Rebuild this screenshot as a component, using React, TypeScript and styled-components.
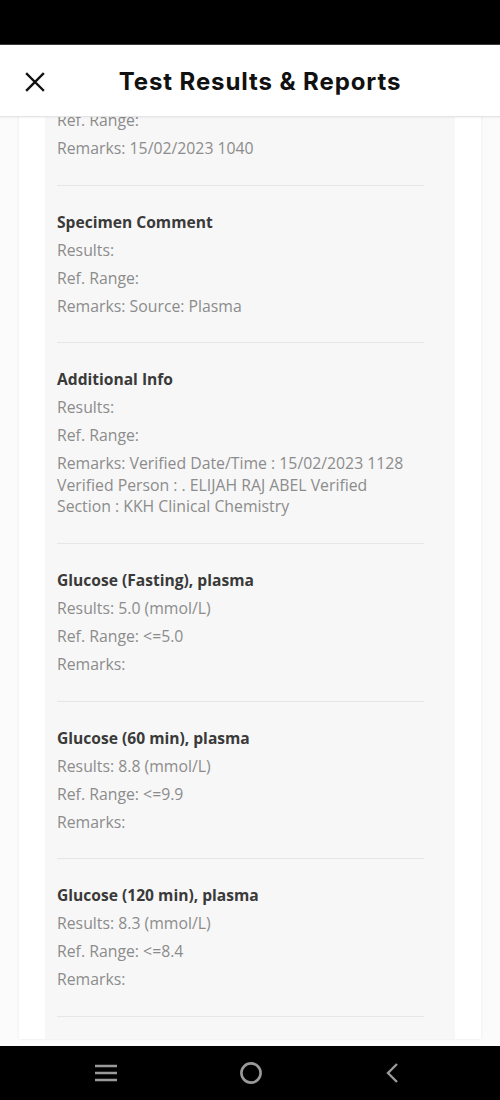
import styled, { createGlobalStyle } from 'styled-components';

type Row = { label: string; value: string };
type Section = { title?: string; rows: Row[] };

const sections: Section[] = [
  {
    rows: [
      { label: 'Ref. Range', value: '' },
      { label: 'Remarks', value: '15/02/2023 1040' },
    ],
  },
  {
    title: 'Specimen Comment',
    rows: [
      { label: 'Results', value: '' },
      { label: 'Ref. Range', value: '' },
      { label: 'Remarks', value: 'Source: Plasma' },
    ],
  },
  {
    title: 'Additional Info',
    rows: [
      { label: 'Results', value: '' },
      { label: 'Ref. Range', value: '' },
      {
        label: 'Remarks',
        value:
          'Verified Date/Time : 15/02/2023 1128 Verified Person : . ELIJAH RAJ ABEL Verified Section : KKH Clinical Chemistry',
      },
    ],
  },
  {
    title: 'Glucose (Fasting), plasma',
    rows: [
      { label: 'Results', value: '5.0 (mmol/L)' },
      { label: 'Ref. Range', value: '<=5.0' },
      { label: 'Remarks', value: '' },
    ],
  },
  {
    title: 'Glucose (60 min), plasma',
    rows: [
      { label: 'Results', value: '8.8 (mmol/L)' },
      { label: 'Ref. Range', value: '<=9.9' },
      { label: 'Remarks', value: '' },
    ],
  },
  {
    title: 'Glucose (120 min), plasma',
    rows: [
      { label: 'Results', value: '8.3 (mmol/L)' },
      { label: 'Ref. Range', value: '<=8.4' },
      { label: 'Remarks', value: '' },
    ],
  },
  {
    title: 'Glucose (180 min), plasma',
    rows: [
      { label: 'Results', value: '' },
      { label: 'Ref. Range', value: '' },
      { label: 'Remarks', value: '' },
    ],
  },
];

export default function App() {
  return (
    <>
      <GlobalStyle />
      <Screen>
        <StatusBar />
        <Header>
          <CloseButton aria-label="Close">
            <svg width="20" height="20" viewBox="0 0 20 20">
              <path d="M2 2 L18 18 M18 2 L2 18" stroke="#111" strokeWidth="2.4" strokeLinecap="square" />
            </svg>
          </CloseButton>
          <Title>Test Results &amp; Reports</Title>
        </Header>

        <Body>
          <Card>
            <Panel>
              {sections.map((section, i) => (
                <Block key={i} first={i === 0}>
                  {section.title && <BlockTitle>{section.title}</BlockTitle>}
                  {section.rows.map((row) => (
                    <Line key={row.label}>
                      {row.label}:{row.value ? ` ${row.value}` : ''}
                    </Line>
                  ))}
                </Block>
              ))}
            </Panel>
          </Card>
        </Body>

        <NavBar>
          <svg width="24" height="20" viewBox="0 0 24 20">
            <path d="M1 3 H23 M1 10 H23 M1 17 H23" stroke="#9a9a9a" strokeWidth="2.6" />
          </svg>
          <svg width="24" height="24" viewBox="0 0 24 24">
            <circle cx="12" cy="12" r="9.6" fill="none" stroke="#9a9a9a" strokeWidth="2.6" />
          </svg>
          <svg width="16" height="22" viewBox="0 0 16 22">
            <path d="M13 2 L4 11 L13 20" fill="none" stroke="#9a9a9a" strokeWidth="2.4" />
          </svg>
        </NavBar>
      </Screen>
    </>
  );
}

const GlobalStyle = createGlobalStyle`
  html, body {
    margin: 0;
    padding: 0;
    background: #fff;
  }
  * {
    box-sizing: border-box;
  }
`;

const Screen = styled.div`
  width: 500px;
  height: 1100px;
  display: flex;
  flex-direction: column;
  overflow: hidden;
  background: #fff;
`;

const StatusBar = styled.div`
  height: 45px;
  flex-shrink: 0;
  background: #000;
  border-bottom: 1px solid #3a3a3a;
`;

const Header = styled.header`
  position: relative;
  z-index: 2;
  height: 72px;
  flex-shrink: 0;
  display: flex;
  align-items: center;
  justify-content: center;
  background: #fff;
  border-bottom: 1px solid #e4e4e4;
  box-shadow: 0 1px 2px rgba(0, 0, 0, 0.05);
`;

const CloseButton = styled.button`
  position: absolute;
  left: 25px;
  top: 27px;
  width: 20px;
  height: 20px;
  padding: 0;
  border: none;
  background: none;
  display: flex;
`;

const Title = styled.h1`
  margin: 2px 0 0 20px;
  font-family: 'Inter', 'Noto Sans', sans-serif;
  font-size: 24px;
  font-weight: 700;
  color: #111;
  letter-spacing: 0.9px;
`;

const Body = styled.main`
  flex: 1;
  overflow: hidden;
  background: #fbfbfb;
  padding: 0 19px;
`;

const Card = styled.div`
  height: 100%;
  background: #fff;
  padding: 0 26px;
  box-shadow: 0 0 3px rgba(0, 0, 0, 0.08);
`;

const Panel = styled.div`
  height: 100%;
  background: #f7f7f7;
  padding: 0 31px 0 12px;
`;

const Block = styled.section<{ first?: boolean }>`
  display: flex;
  flex-direction: column;
  gap: 6.5px;
  padding: ${(p) => (p.first ? '0' : '26px')} 0 25.2px;
  margin-top: ${(p) => (p.first ? '-7px' : '0')};
  border-bottom: 1px solid #e6e6e6;
`;

const BlockTitle = styled.h2`
  margin: 0;
  font-family: 'Open Sans', sans-serif;
  font-size: 15.6px;
  line-height: 21.5px;
  font-weight: 700;
  color: #3a3a3a;
`;

const Line = styled.p`
  margin: 0;
  font-family: 'Open Sans', sans-serif;
  font-size: 15.8px;
  line-height: 21.5px;
  color: #8c8c8c;
`;

const NavBar = styled.nav`
  height: 54px;
  flex-shrink: 0;
  background: #000;
  display: flex;
  align-items: center;
  justify-content: space-between;
  padding: 0 100px 0 94px;
`;
